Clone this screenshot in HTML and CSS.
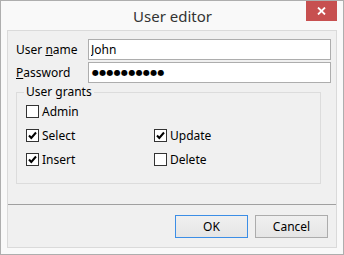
FILE: index.html
```html
<!DOCTYPE html>
<html lang="en">
<head>
  <meta charset="UTF-8">
  <title>User editor</title>
  <link rel="stylesheet" href="styles.css">
</head>
<body>

<div class="window">
  <div class="titlebar">
    <span class="title">User editor</span>
    <button class="close" aria-label="Close">
      <svg width="9" height="8" viewBox="0 0 9 8"><path d="M1 0.5 L8 7.5 M8 0.5 L1 7.5" stroke="#fff" stroke-width="1.8" fill="none"/></svg>
    </button>
  </div>

  <div class="client">
    <div class="form">
      <div class="fields">
        <label class="field-label" for="username">User <u>n</u>ame</label>
        <input class="field" id="username" type="text" value="John">
        <label class="field-label" for="password"><u>P</u>assword</label>
        <div class="field password" id="password">●●●●●●●●●●</div>
      </div>

      <fieldset class="grants">
        <legend>User grants</legend>
        <div class="checks">
          <label class="check"><span class="box"></span>Admin</label>
          <span></span>
          <label class="check"><span class="box checked"><svg width="11" height="11" viewBox="0 0 11 11"><path d="M2 5.5 L4.3 8 L9 2.5" stroke="#000" stroke-width="2" fill="none"/></svg></span>Select</label>
          <label class="check"><span class="box checked"><svg width="11" height="11" viewBox="0 0 11 11"><path d="M2 5.5 L4.3 8 L9 2.5" stroke="#000" stroke-width="2" fill="none"/></svg></span>Update</label>
          <label class="check"><span class="box checked"><svg width="11" height="11" viewBox="0 0 11 11"><path d="M2 5.5 L4.3 8 L9 2.5" stroke="#000" stroke-width="2" fill="none"/></svg></span>Insert</label>
          <label class="check"><span class="box"></span>Delete</label>
        </div>
      </fieldset>
    </div>

    <div class="footer">
      <button class="btn default">OK</button>
      <button class="btn">Cancel</button>
    </div>
  </div>
</div>

</body>
</html>
```

FILE: styles.css
```css
html, body {
  margin: 0;
  padding: 0;
}
body {
  font-family: "Noto Sans", "Liberation Sans", sans-serif;
  font-size: 12px;
  color: #000;
  background: #f9f9f9;
}
.window {
  box-sizing: border-box;
  width: 344px;
  height: 255px;
  border: 1px solid #aeaeae;
  background: #f9f9f9;
  display: flex;
  flex-direction: column;
}
.titlebar {
  position: relative;
  height: 29px;
  display: flex;
  align-items: center;
  justify-content: center;
}
.title {
  font-size: 15px;
  color: #333;
  padding-left: 1px;
}
.close {
  position: absolute;
  top: 0;
  right: 6px;
  width: 31px;
  height: 20px;
  border: 0;
  padding: 0;
  background: #c75050;
  display: flex;
  align-items: center;
  justify-content: center;
}
.client {
  flex: 1;
  margin: 0 6px 6px;
  border: 1px solid #dadada;
  background: #f0f0f0;
  display: flex;
  flex-direction: column;
}
.form {
  flex: 1;
  padding: 8px 5px 0 8px;
}
.fields {
  display: grid;
  grid-template-columns: 72px 1fr;
  grid-auto-rows: 21px;
  row-gap: 2px;
  align-items: center;
}
.field {
  box-sizing: border-box;
  height: 21px;
  width: 100%;
  margin: 0;
  border: 1px solid #adadad;
  background: #fff;
  padding: 0 2px;
  font: inherit;
  color: #000;
  outline: none;
}
.password {
  display: flex;
  align-items: center;
  font-family: "DejaVu Sans", sans-serif;
  font-size: 8px;
  letter-spacing: 0.3px;
  padding-left: 3px;
}
.grants {
  box-sizing: border-box;
  width: 305px;
  margin: 2px 0 0 0;
  padding: 1px 0 12px 0;
  border: 1px solid #dcdcdc;
}
.grants legend {
  margin-left: 7px;
  padding: 0 2px;
  line-height: 14px;
}
.checks {
  display: grid;
  grid-template-columns: 128px 1fr;
  grid-template-rows: 23px 24px 24px;
  align-items: center;
  padding-left: 9px;
}
.check {
  display: flex;
  align-items: center;
  gap: 3px;
}
.box {
  box-sizing: border-box;
  width: 13px;
  height: 13px;
  border: 1px solid #333;
  background: #fff;
  display: flex;
}
.footer {
  border-top: 1px solid #a0a0a0;
  padding: 10px 8px 9px;
  display: flex;
  justify-content: flex-end;
  gap: 7px;
}
.btn {
  width: 73px;
  height: 23px;
  margin: 0;
  padding: 0;
  border: 1px solid #acacac;
  background: linear-gradient(#f0f0f0, #e5e5e5);
  font: inherit;
  color: #000;
}
.btn.default {
  border-color: #3c8ee6;
}
```
